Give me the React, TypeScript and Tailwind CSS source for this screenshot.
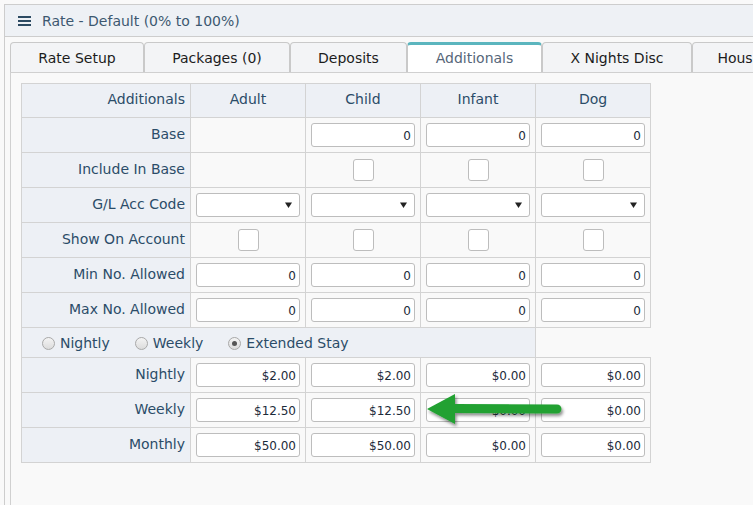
import React from "react";

const font = { fontFamily: '"DejaVu Sans", Verdana, sans-serif' };

const tabs = [
  { label: "Rate Setup", w: "w-[134px]" },
  { label: "Packages (0)", w: "w-[146px]" },
  { label: "Deposits", w: "w-[117px]" },
  { label: "Additionals", w: "w-[135px]", active: true },
  { label: "X Nights Disc", w: "w-[150px]" },
  { label: "Housekeeping", w: "w-[150px]" },
];

function NumInput({ v }: { v: string }) {
  return (
    <div className="mx-auto flex h-[24px] w-[104px] items-center justify-end rounded-[3px] border border-[#bdbdbd] bg-white pr-[3px] pt-[1px] text-[12px] text-[#1c2b3a]">
      {v}
    </div>
  );
}

function Check() {
  return <div className="mx-auto h-[22px] w-[21px] rounded-[3px] border border-[#bdbdbd] bg-white" />;
}

function Select() {
  return (
    <div className="mx-auto flex h-[24px] w-[104px] items-center justify-end rounded-[3px] border border-[#bdbdbd] bg-white pr-[7px]">
      <svg width="7" height="6" viewBox="0 0 7 6">
        <path d="M0 0.5 L7 0.5 L3.5 6 Z" fill="#222" />
      </svg>
    </div>
  );
}

function Radio({ checked }: { checked?: boolean }) {
  return (
    <span className="relative inline-flex h-[13px] w-[13px] items-center justify-center rounded-full border border-[#a9a9a9] bg-gradient-to-b from-[#f4f4f4] to-[#dcdcdc]">
      {checked && <span className="h-[5px] w-[5px] rounded-full bg-[#555]" />}
    </span>
  );
}

const labelTd = "h-[35px] border border-[#d3d3d3] bg-[#edf0f5] pb-[2px] pr-[5px] text-right align-middle text-[14px] text-[#2b4c68]";
const dataTd = "h-[35px] border border-[#d3d3d3] p-0 align-middle";

export default function App() {
  const rows: { label: string; cells: React.ReactNode[] }[] = [
    { label: "Base", cells: [null, <NumInput v="0" />, <NumInput v="0" />, <NumInput v="0" />] },
    { label: "Include In Base", cells: [null, <Check />, <Check />, <Check />] },
    { label: "G/L Acc Code", cells: [<Select />, <Select />, <Select />, <Select />] },
    { label: "Show On Account", cells: [<Check />, <Check />, <Check />, <Check />] },
    { label: "Min No. Allowed", cells: [<NumInput v="0" />, <NumInput v="0" />, <NumInput v="0" />, <NumInput v="0" />] },
    { label: "Max No. Allowed", cells: [<NumInput v="0" />, <NumInput v="0" />, <NumInput v="0" />, <NumInput v="0" />] },
  ];
  const rateRows: { label: string; vals: string[] }[] = [
    { label: "Nightly", vals: ["$2.00", "$2.00", "$0.00", "$0.00"] },
    { label: "Weekly", vals: ["$12.50", "$12.50", "$0.00", "$0.00"] },
    { label: "Monthly", vals: ["$50.00", "$50.00", "$0.00", "$0.00"] },
  ];

  return (
    <div className="relative h-[505px] w-[753px] overflow-hidden bg-[#f9f9f9]" style={font}>
      <div className="ml-[4px] mt-[4px] h-[501px] border-l border-t border-[#cdcdcd]">
        <div className="flex h-[32px] items-center border-b border-[#cdcdcd] bg-[#eef1f5] pl-[13px] pt-[1px]">
          <svg width="13" height="10" viewBox="0 0 13 10" className="mr-[11px]">
            <rect x="0" y="0" width="13" height="2" fill="#2c4a62" />
            <rect x="0" y="4" width="13" height="2" fill="#2c4a62" />
            <rect x="0" y="8" width="13" height="2" fill="#2c4a62" />
          </svg>
          <span className="text-[14px] text-[#3d5870]">Rate - Default (0% to 100%)</span>
        </div>
        <div className="pl-[5px] pt-[5px]">
          <div className="flex h-[30px] whitespace-nowrap">
            {tabs.map((t) => (
              <div
                key={t.label}
                className={
                  t.active
                    ? `${t.w} flex shrink-0 items-center justify-center rounded-t-[4px] border-x border-t-[3px] border-x-[#c9c9c9] border-t-[#5bb5be] bg-white text-[14px] text-[#566679]`
                    : `${t.w} flex shrink-0 items-center justify-center rounded-t-[4px] border-x border-t border-[#c9c9c9] bg-[#f3f4f6] pt-[1px] text-[14px] text-[#1c1c1c]`
                }
              >
                {t.label}
              </div>
            ))}
          </div>
          <div className="h-[440px] border-l border-t border-[#d0d0d0] pl-[10px] pt-[10px]">
            <table className="w-[630px] table-fixed border-collapse">
              <colgroup>
                <col className="w-[169px]" />
                <col className="w-[115px]" />
                <col className="w-[115px]" />
                <col className="w-[115px]" />
                <col className="w-[115px]" />
              </colgroup>
              <tbody>
                <tr>
                  <td className="h-[34px] border border-[#d3d3d3] bg-[#edf0f5] pb-[2px] pr-[5px] text-right align-middle text-[14px] text-[#2b4c68]">Additionals</td>
                  {["Adult", "Child", "Infant", "Dog"].map((h) => (
                    <td key={h} className="h-[34px] border border-[#d3d3d3] bg-[#edf0f5] pb-[2px] text-center align-middle text-[14px] text-[#2b4c68]">
                      {h}
                    </td>
                  ))}
                </tr>
                {rows.map((r) => (
                  <tr key={r.label}>
                    <td className={labelTd}>{r.label}</td>
                    {r.cells.map((c, i) => (
                      <td key={i} className={dataTd}>
                        {c}
                      </td>
                    ))}
                  </tr>
                ))}
                <tr>
                  <td colSpan={4} className="h-[30px] border border-[#d3d3d3] bg-[#edf0f5] pl-[20px] pt-[1px] align-middle text-[14px] text-[#2b4c68]">
                    <div className="flex items-center">
                      <Radio />
                      <span className="ml-[5px]">Nightly</span>
                      <span className="ml-[25px] flex">
                        <Radio />
                      </span>
                      <span className="ml-[5px]">Weekly</span>
                      <span className="ml-[25px] flex">
                        <Radio checked />
                      </span>
                      <span className="ml-[5px]">Extended Stay</span>
                    </div>
                  </td>
                </tr>
                {rateRows.map((r) => (
                  <tr key={r.label}>
                    <td className={labelTd}>{r.label}</td>
                    {r.vals.map((v, i) => (
                      <td key={i} className={dataTd}>
                        <NumInput v={v} />
                      </td>
                    ))}
                  </tr>
                ))}
              </tbody>
            </table>
          </div>
        </div>
      </div>
      <svg className="absolute left-[420px] top-[388px]" width="150" height="45" viewBox="0 0 150 45">
        <defs>
          <filter id="sh" x="-20%" y="-40%" width="140%" height="180%">
            <feDropShadow dx="1.5" dy="2.5" stdDeviation="1.8" floodColor="#000" floodOpacity="0.45" />
          </filter>
        </defs>
        <g filter="url(#sh)">
          <path d="M7 21 L35 6 L35 16 L137 16.5 A4.5 4.5 0 0 1 137 25.5 L35 25 L35 36 Z" fill="#21a132" />
        </g>
      </svg>
    </div>
  );
}
